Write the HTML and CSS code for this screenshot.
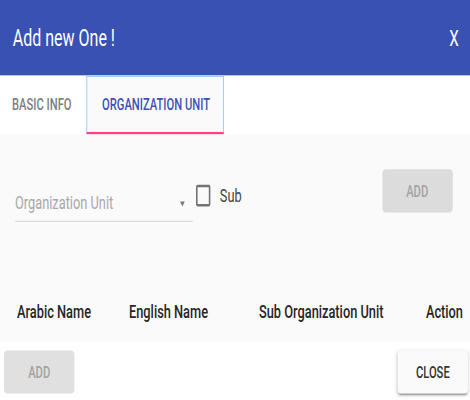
FILE: index.html
```html
<!DOCTYPE html>
<html lang="en">
<head>
<meta charset="utf-8">
<title>Add new One !</title>
<link rel="stylesheet" href="styles.css">
</head>
<body>
<div class="dialog">
  <header class="dialog-header">
    <h1 class="title">Add new One !</h1>
    <button class="close-x" type="button">X</button>
  </header>
  <nav class="tabs">
    <div class="tab">BASIC INFO</div>
    <div class="tab active">ORGANIZATION UNIT</div>
  </nav>
  <section class="content">
    <div class="form-row">
      <div class="select">
        <span class="placeholder">Organization Unit</span>
        <span class="arrow"></span>
      </div>
      <label class="check"><span class="box"></span><span class="check-label">Sub</span></label>
      <button class="btn btn-disabled" type="button">ADD</button>
    </div>
    <div class="table-head">
      <div>Arabic Name</div>
      <div>English Name</div>
      <div>Sub Organization Unit</div>
      <div>Action</div>
    </div>
  </section>
  <footer class="actions">
    <button class="btn btn-disabled btn-white" type="button">ADD</button>
    <button class="btn btn-raised" type="button">CLOSE</button>
  </footer>
</div>
</body>
</html>
```
FILE: styles.css
```css
html {
  overflow: hidden;
}

body {
  margin: 0;
  padding: 0;
  width: 470px;
  height: 400px;
  background: #ffffff;
}

.dialog {
  width: 587.5px;
  height: 333.33px;
  transform: scale(0.8, 1.2);
  transform-origin: 0 0;
  font-family: Roboto, "Noto Sans", sans-serif;
  display: flex;
  flex-direction: column;
}

.dialog-header {
  height: 62.5px;
  flex: none;
  background: #3951b2;
  color: #ffffff;
  display: flex;
  align-items: center;
  justify-content: space-between;
  padding: 0 14px 0 16px;
  box-sizing: border-box;
}

.title {
  margin: 0;
  font-size: 20px;
  font-weight: 400;
  line-height: 1;
}

.close-x {
  background: none;
  border: 0;
  padding: 0;
  color: #ffffff;
  font-family: inherit;
  font-size: 19px;
  line-height: 1;
}

.tabs {
  height: 49.2px;
  flex: none;
  display: flex;
  background: #ffffff;
}

.tab {
  display: flex;
  align-items: center;
  box-sizing: border-box;
  width: 107.5px;
  padding-left: 15px;
  font-size: 14px;
  font-weight: 500;
  color: #808080;
}

.tab.active {
  width: 172.5px;
  padding-left: 19px;
  border: 1px solid #90c4f7;
  border-bottom: 2px solid #ff4081;
  background: #fafafa;
  color: #3f51b5;
}

.content {
  height: 172.5px;
  flex: none;
  background: #fafafa;
  display: flex;
  flex-direction: column;
  justify-content: space-between;
}

.form-row {
  display: flex;
  align-items: flex-start;
  padding: 29px 22px 0 18.75px;
}

.select {
  width: 222px;
  height: 44px;
  box-sizing: border-box;
  display: flex;
  align-items: flex-end;
  justify-content: space-between;
  padding-bottom: 6.5px;
  border-bottom: 1px solid #dadada;
}

.placeholder {
  font-size: 16px;
  line-height: 16px;
  color: #a8a8a8;
}

.arrow {
  width: 0;
  height: 0;
  border-left: 3.5px solid transparent;
  border-right: 3.5px solid transparent;
  border-top: 4px solid #7a7a7a;
  margin: 0 10px 5px 0;
}

.check {
  display: flex;
  align-items: flex-start;
  margin-left: 4px;
}

.box {
  width: 18px;
  height: 18px;
  box-sizing: border-box;
  border: 2px solid #737373;
  border-radius: 2px;
  margin-top: 13.5px;
}

.check-label {
  margin-left: 12px;
  margin-top: 14px;
  font-size: 16px;
  line-height: 16px;
  color: #444444;
}

.btn {
  width: 88px;
  height: 36px;
  border: 0;
  border-radius: 4px;
  font-family: inherit;
  font-size: 14px;
  font-weight: 500;
  padding: 0;
}

.form-row .btn {
  margin-left: auto;
}

.btn-disabled {
  background: #dcdcdc;
  color: #a3a3a3;
}

.btn-white {
  background: #e0e0e0;
}

.btn-raised {
  background: #fafafa;
  color: #333333;
  box-shadow: 0 3px 1px -2px rgba(0, 0, 0, 0.2), 0 2px 2px 0 rgba(0, 0, 0, 0.14), 0 1px 5px 0 rgba(0, 0, 0, 0.12);
}

.table-head {
  height: 50px;
  display: grid;
  grid-template-columns: 140px 162.5px 1fr auto;
  align-items: center;
  padding: 0 8.75px 0 21.25px;
  font-size: 16px;
  font-weight: 500;
  color: #262626;
}

.actions {
  flex: 1;
  display: flex;
  align-items: flex-start;
  justify-content: space-between;
  padding: 7.5px 2.5px 0 5px;
}
```
